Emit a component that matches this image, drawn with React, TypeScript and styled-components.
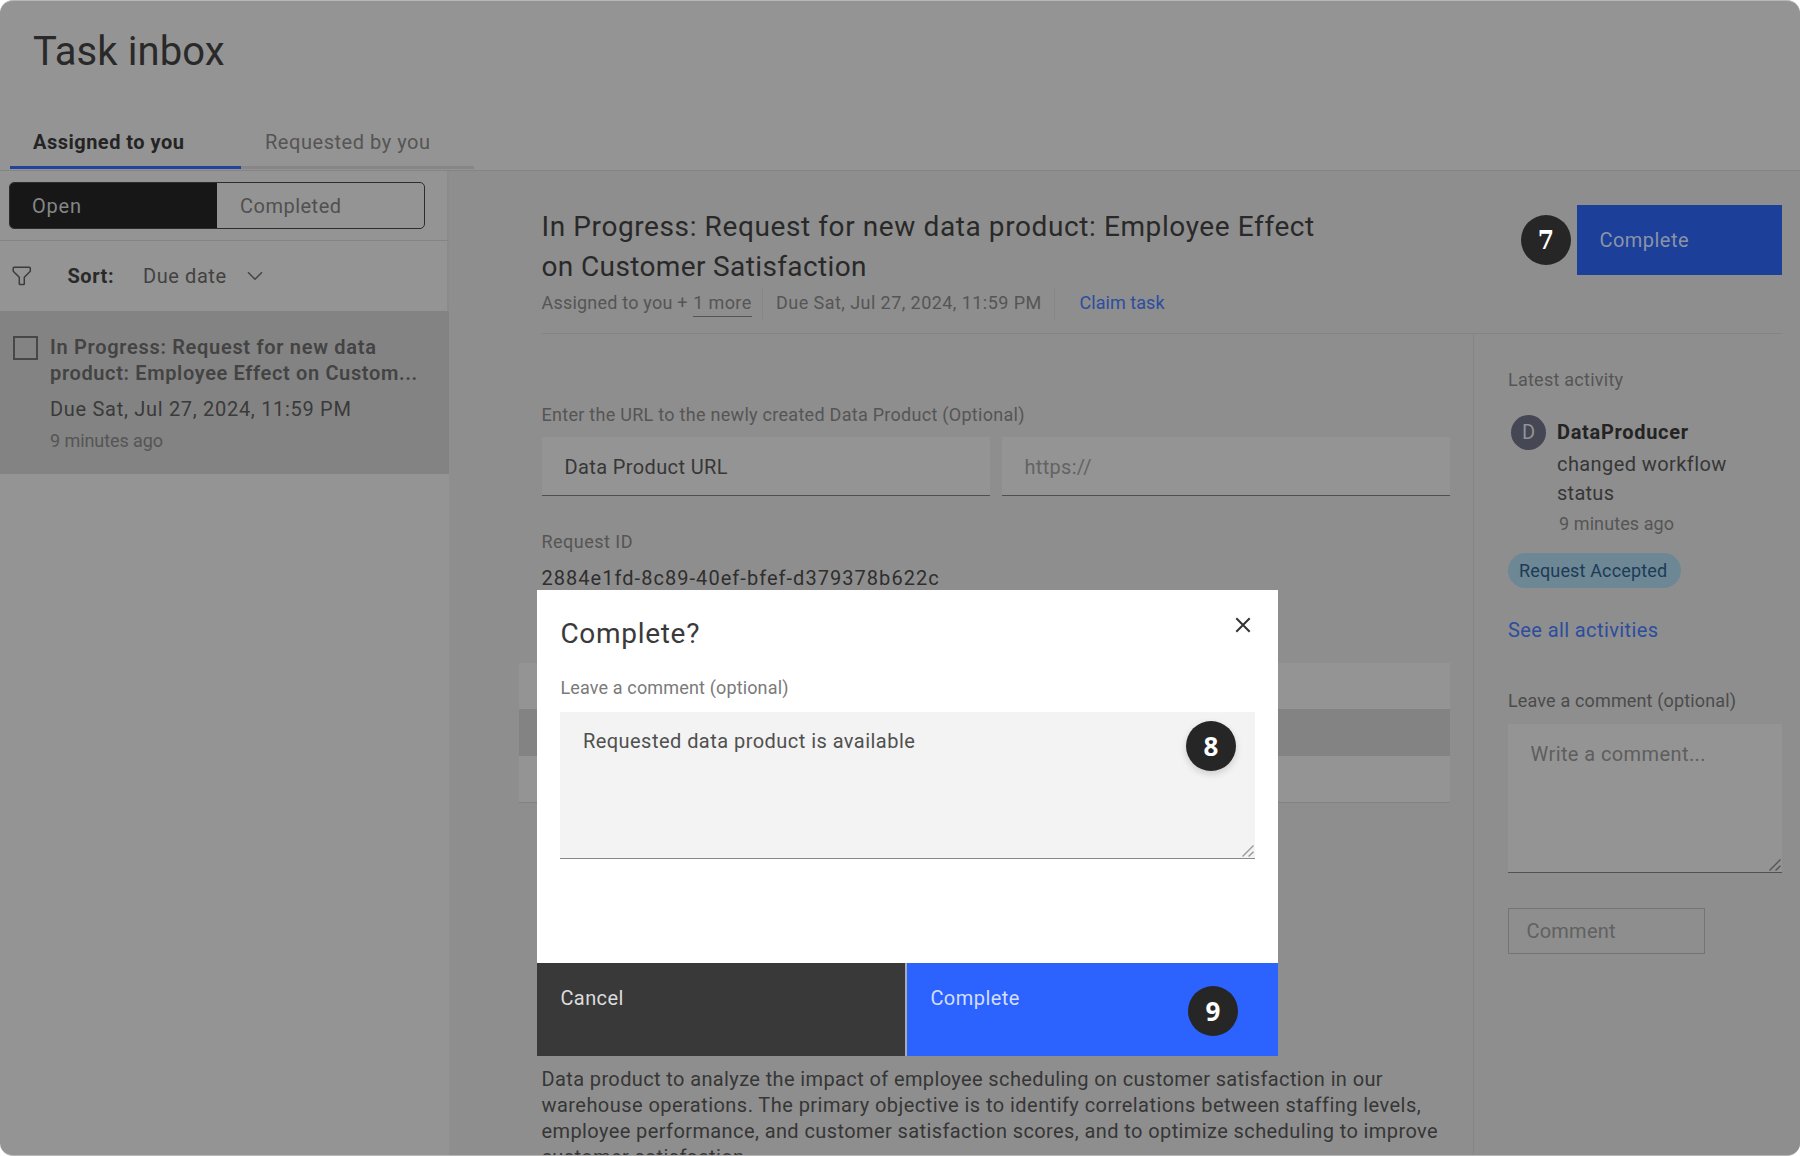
import React from 'react';
import styled, { createGlobalStyle } from 'styled-components';

const GlobalStyle = createGlobalStyle`
  *, *::before, *::after { box-sizing: border-box; }
  body { margin: 0; background: #fff; font-family: Roboto, "Noto Sans", "Liberation Sans", sans-serif; }
  button { font-family: inherit; border: 0; margin: 0; text-align: left; }
`;

const color = {
  layer: '#949494',
  surface: '#8e8e8e',
  selected: '#838383',
  rule: '#848484',
  heading: '#292929',
  body: '#363636',
  muted: '#555',
  placeholder: '#636363',
  link: '#2b4d9e',
};

const Text = styled.div<{
  $size?: number; $line?: number; $weight?: number; $track?: number; $color?: string; $top?: number; $left?: number;
}>`
  font-size: ${p => p.$size ?? 20}px;
  line-height: ${p => p.$line ?? 26}px;
  font-weight: ${p => p.$weight ?? 400};
  letter-spacing: ${p => p.$track ?? 0.4}px;
  color: ${p => p.$color ?? color.body};
  margin-top: ${p => p.$top ?? 0}px;
  margin-left: ${p => p.$left ?? 0}px;
  white-space: nowrap;
`;

const Label = styled(Text).attrs({ $size: 18, $line: 24 })``;

const Screen = styled.div`
  position: relative;
  width: 1800px;
  height: 1156px;
  display: flex;
  flex-direction: column;
  overflow: hidden;
  border-radius: 13px;
  border-top: 1px solid #b8b8b8;
  border-bottom: 1px solid #b8b8b8;
  background: ${color.layer};
`;

const Header = styled.header`
  flex: none;
  height: 170px;
  padding-top: 28px;
  display: flex;
  flex-direction: column;
  justify-content: space-between;
  border-bottom: 1px solid ${color.rule};
`;

const Tabs = styled.nav`
  display: flex;
  padding-left: 10px;
  margin-bottom: 1px;
`;

const Tab = styled.div<{ $active?: boolean }>`
  width: ${p => (p.$active ? 231 : 233)}px;
  height: 40px;
  padding-left: ${p => (p.$active ? 23 : 24)}px;
  border-bottom: 3px solid ${p => (p.$active ? '#21439b' : '#868686')};
`;

const Body = styled.div`
  flex: 1;
  min-height: 0;
  display: flex;
`;

const Sidebar = styled.aside`
  flex: none;
  width: 449px;
`;

const SidebarBar = styled.div<{ $ruled?: boolean }>`
  height: 70px;
  display: flex;
  align-items: center;
  border-right: 2px solid #8b8b8b;
  ${p => p.$ruled && `border-bottom: 1px solid ${color.rule};`}
`;

const Switcher = styled.div`
  display: flex;
  width: 416px;
  height: 47px;
  margin-left: 9px;
  border: 1px solid #2d2d2d;
  border-radius: 5px;
  overflow: hidden;
`;

const SwitchOption = styled.div<{ $on?: boolean }>`
  width: 207px;
  padding: 10px 0 0 ${p => (p.$on ? 22 : 23)}px;
  background: ${p => (p.$on ? '#171717' : 'transparent')};
`;

const FilterIcon = styled.svg`
  width: 20px;
  height: 20px;
  margin-left: 11.5px;
`;

const ChevronIcon = styled.svg`
  width: 16px;
  height: 10px;
  margin-left: 20px;
`;

const TaskItem = styled.div`
  height: 163px;
  display: flex;
  gap: 12px;
  padding: 23px 0 0 13px;
  background: ${color.selected};
`;

const Checkbox = styled.div`
  flex: none;
  width: 25px;
  height: 24px;
  margin-top: 2px;
  border: 2px solid #474747;
`;

const Main = styled.main`
  flex: 1;
  display: flex;
  flex-direction: column;
  padding: 0 18px 0 92.5px;
  background: ${color.surface};
`;

const TaskHeader = styled.section`
  flex: none;
  height: 163px;
  padding-top: 35px;
  display: flex;
  justify-content: space-between;
  align-items: flex-start;
  border-bottom: 1px solid ${color.rule};
`;

const Meta = styled.div`
  display: flex;
  height: 31px;
  margin-top: 1px;
`;

const Divider = styled.div`
  width: 1px;
  background: #868686;
`;

const MoreLink = styled.div`
  height: 29px;
  margin: 0 10.5px 0 5.5px;
  border-bottom: 1px solid #555;
`;

const PrimaryAction = styled.button`
  width: 205.5px;
  height: 70px;
  margin-top: -0.6px;
  padding: 22px 0 0 23px;
  display: flex;
  background: #1c3f99;
`;

const Content = styled.div`
  flex: 1;
  min-height: 0;
  display: flex;
`;

const Form = styled.section`
  flex: none;
  width: 932px;
  padding: 69px 23px 0 0;
  border-right: 1px solid #858585;
`;

const Fields = styled.div`
  display: grid;
  grid-template-columns: 1fr 1fr;
  gap: 12px;
  margin-top: 10px;
`;

const Field = styled.div`
  height: 59px;
  padding: 17px 0 0 23px;
  background: ${color.layer};
  border-bottom: 1px solid #505050;
`;

const Table = styled.div`
  margin: 72px 0 0 -23px;
  border-bottom: 1px solid #828282;
`;

const TableRow = styled.div<{ $head?: boolean }>`
  height: 46.4px;
  background: ${p => (p.$head ? color.selected : color.layer)};
`;

const Description = styled.div`
  margin-top: 262.8px;
`;

const Activity = styled.section`
  flex: 1;
  display: flex;
  flex-direction: column;
  align-items: flex-start;
  padding: 34px 0 0 34.5px;
`;

const Event = styled.div`
  display: flex;
  gap: 11px;
  margin-top: 23px;
  padding-left: 3px;
`;

const Avatar = styled.div`
  width: 35px;
  height: 35px;
  border-radius: 50%;
  background: #454754;
  color: #929298;
  font-size: 20px;
  line-height: 35px;
  text-align: center;
`;

const Tag = styled.div`
  height: 35px;
  width: 173px;
  margin-top: 17px;
  padding-left: 11px;
  border-radius: 18px;
  background: #6d8795;
`;

const TextArea = styled.div<{ $light?: boolean }>`
  display: flex;
  justify-content: space-between;
  width: 100%;
  height: ${p => (p.$light ? 147 : 149)}px;
  margin-top: ${p => (p.$light ? 12 : 11)}px;
  padding: ${p => (p.$light ? 16 : 17)}px 1px 1px 22.5px;
  background: ${p => (p.$light ? '#f3f3f3' : color.layer)};
  border-bottom: ${p => (p.$light ? '1px solid #888' : '1px solid #525252')};
`;

const Grip = styled.svg`
  width: 12px;
  height: 12px;
  align-self: flex-end;
`;

const CommentButton = styled.button`
  width: 197px;
  height: 46px;
  margin-top: 35px;
  padding: 0 0 0 17.5px;
  background: transparent;
  border: 1px solid #747474;
`;

const Modal = styled.div`
  position: absolute;
  left: 537.4px;
  top: 589px;
  width: 740.6px;
  height: 465.5px;
  display: flex;
  flex-direction: column;
  background: #fff;
`;

const ModalBody = styled.div`
  flex: 1;
  padding: 24px 23px 0;
`;

const ModalTop = styled.div`
  display: flex;
  justify-content: space-between;
`;

const CloseIcon = styled.svg`
  width: 16px;
  height: 16px;
  margin: 3px 4px 0 0;
`;

const ModalFooter = styled.div`
  display: grid;
  grid-template-columns: 368px 1fr;
  gap: 2px;
  height: 92.5px;
  background: #a5abb8;
`;

const FooterButton = styled.button<{ $primary?: boolean }>`
  display: flex;
  padding: 22px 0 0 23px;
  background: ${p => (p.$primary ? '#2c63ff' : '#393939')};
`;

const Step = styled.div<{ $x: number; $y: number; $slab?: boolean; $raised?: boolean }>`
  position: absolute;
  left: ${p => p.$x}px;
  top: ${p => p.$y}px;
  width: 50px;
  height: 50px;
  border-radius: 50%;
  background: #262626;
  color: #fff;
  font: 700 26px/${p => (p.$slab ? 50 : 51)}px ${p => (p.$slab ? '"DejaVu Serif Condensed", "DejaVu Serif"' : '"Noto Sans"')}, sans-serif;
  text-align: center;
  ${p => p.$raised && 'box-shadow: 0 3px 7px rgba(0, 0, 0, 0.16);'}
`;

const ResizeGrip = ({ stroke }: { stroke: string }) => (
  <Grip viewBox="0 0 12 12" fill="none" stroke={stroke} strokeWidth="1.4">
    <path d="M0.5 11.5 11.5 0.5M6.5 11.5 11.5 6.8" />
  </Grip>
);

export default function App() {
  return (
    <>
      <GlobalStyle />
      <Screen>
        <Header>
          <Text $size={40} $line={46} $track={0.1} $left={33} $color={color.heading}>Task inbox</Text>
          <Tabs>
            <Tab $active><Text $weight={700} $track={0.49} $color="#242424">Assigned to you</Text></Tab>
            <Tab><Text $track={0.54} $color="#555">Requested by you</Text></Tab>
          </Tabs>
        </Header>
        <Body>
          <Sidebar>
            <SidebarBar $ruled>
              <Switcher>
                <SwitchOption $on><Text $track={0.79} $color="#868686">Open</Text></SwitchOption>
                <SwitchOption><Text $track={0.49} $color="#505050">Completed</Text></SwitchOption>
              </Switcher>
            </SidebarBar>
            <SidebarBar>
              <FilterIcon viewBox="0 0 20 20" fill="none" stroke="#3c3c3c" strokeWidth="1.5" strokeLinejoin="round">
                <path d="M2 1.3H17.4Q18.3 1.3 18.3 2.2V5.2L12.3 11.3V17.7Q12.3 18.5 11.5 18.5H8.1Q7.3 18.5 7.3 17.7V11.3L1.2 5.2V2.2Q1.2 1.3 2 1.3Z" />
              </FilterIcon>
              <Text $weight={700} $track={0.55} $left={36} $color="#292929">Sort:</Text>
              <Text $track={0.57} $left={29} $color="#424242">Due date</Text>
              <ChevronIcon viewBox="0 0 16 10" fill="none" stroke="#444" strokeWidth="1.5">
                <path d="M1 1.2 8 8.2 15 1.2" />
              </ChevronIcon>
            </SidebarBar>
            <TaskItem>
              <Checkbox />
              <div>
                <Text $weight={600} $track={0.7} $color="#434343">In Progress: Request for new data</Text>
                <Text $weight={600} $track={0.64} $color="#434343">product: Employee Effect on Custom...</Text>
                <Text $track={0.7} $top={10} $color="#3a3a3a">Due Sat, Jul 27, 2024, 11:59 PM</Text>
                <Label $track={-0.08} $top={7} $color="#555">9 minutes ago</Label>
              </div>
            </TaskItem>
          </Sidebar>
          <Main>
            <TaskHeader>
              <div>
                <Text $size={28} $line={40} $track={0.6} $top={1} $color={color.heading}>In Progress: Request for new data product: Employee Effect</Text>
                <Text $size={28} $line={40} $track={0.37} $color={color.heading}>on Customer Satisfaction</Text>
                <Meta>
                  <Text $size={18} $line={30} $track={0.21} $color={color.muted}>Assigned to you +</Text>
                  <MoreLink><Text $size={18} $line={30} $track={0.38} $color={color.muted}>1 more</Text></MoreLink>
                  <Divider />
                  <Text $size={18} $line={30} $track={0.44} $left={13} $color={color.muted}>Due Sat, Jul 27, 2024, 11:59 PM</Text>
                  <Text as={Divider} $left={12.5} />
                  <Text $size={18} $line={30} $track={0.04} $left={24.5} $color={color.link}>Claim task</Text>
                </Meta>
              </div>
              <PrimaryAction><Text $track={0.46} $color="#8b93a6">Complete</Text></PrimaryAction>
            </TaskHeader>
            <Content>
              <Form>
                <Label $track={0.28} $color={color.muted}>Enter the URL to the newly created Data Product (Optional)</Label>
                <Fields>
                  <Field><Text $track={0.38} $color="#373737">Data Product URL</Text></Field>
                  <Field><Text $track={0.31} $color={color.placeholder}>https://</Text></Field>
                </Fields>
                <Label $track={0.48} $top={34} $color={color.muted}>Request ID</Label>
                <Text $track={1.04} $top={11} $color="#2f2f2f">2884e1fd-8c89-40ef-bfef-d379378b622c</Text>
                <Table><TableRow /><TableRow $head /><TableRow /></Table>
                <Description>
                  <Text $track={0.38}>Data product to analyze the impact of employee scheduling on customer satisfaction in our</Text>
                  <Text $track={0.45}>warehouse operations. The primary objective is to identify correlations between staffing levels,</Text>
                  <Text $track={0.4}>employee performance, and customer satisfaction scores, and to optimize scheduling to improve</Text>
                  <Text $track={0.4}>customer satisfaction.</Text>
                </Description>
              </Form>
              <Activity>
                <Label $track={0.25} $color={color.muted}>Latest activity</Label>
                <Event>
                  <Avatar>D</Avatar>
                  <div>
                    <Text $weight={700} $line={29} $track={0.69} $top={3} $color="#242424">DataProducer</Text>
                    <Text $line={29} $track={0.42} $top={3.4}>changed workflow</Text>
                    <Text $line={29} $track={0.27}>status</Text>
                    <Label $track={0.09} $top={4} $left={2} $color={color.muted}>9 minutes ago</Label>
                  </div>
                </Event>
                <Tag><Text $size={18} $line={35} $track={0.15} $color="#1d3b56">Request Accepted</Text></Tag>
                <Text $track={0.4} $top={29} $color={color.link}>See all activities</Text>
                <Label $track={0.15} $top={46} $color="#4b4b4b">Leave a comment (optional)</Label>
                <TextArea>
                  <Text $track={0.41} $color="#5e5e5e">Write a comment...</Text>
                  <ResizeGrip stroke="#555" />
                </TextArea>
                <CommentButton><Text $track={0.22} $color="#616161">Comment</Text></CommentButton>
              </Activity>
            </Content>
          </Main>
        </Body>

        <Modal role="dialog">
          <ModalBody>
            <ModalTop>
              <Text $size={28} $line={40} $track={0.7} $color="#3a3a3a">Complete?</Text>
              <CloseIcon viewBox="0 0 16 16" fill="none" stroke="#333" strokeWidth="2">
                <path d="M1.3 1.3 14.7 14.7M14.7 1.3 1.3 14.7" />
              </CloseIcon>
            </ModalTop>
            <Label $track={0.15} $top={22} $color="#7a7a7a">Leave a comment (optional)</Label>
            <TextArea $light>
              <Text $track={0.46} $color="#505050">Requested data product is available</Text>
              <ResizeGrip stroke="#999" />
            </TextArea>
          </ModalBody>
          <ModalFooter>
            <FooterButton><Text $track={0.42} $color="#dcdcdc">Cancel</Text></FooterButton>
            <FooterButton $primary><Text $track={0.46} $color="#d3deff">Complete</Text></FooterButton>
          </ModalFooter>
        </Modal>

        <Step $x={1521} $y={214} $slab>7</Step>
        <Step $x={1186} $y={719.5} $raised>8</Step>
        <Step $x={1188} $y={985}>9</Step>
      </Screen>
    </>
  );
}
